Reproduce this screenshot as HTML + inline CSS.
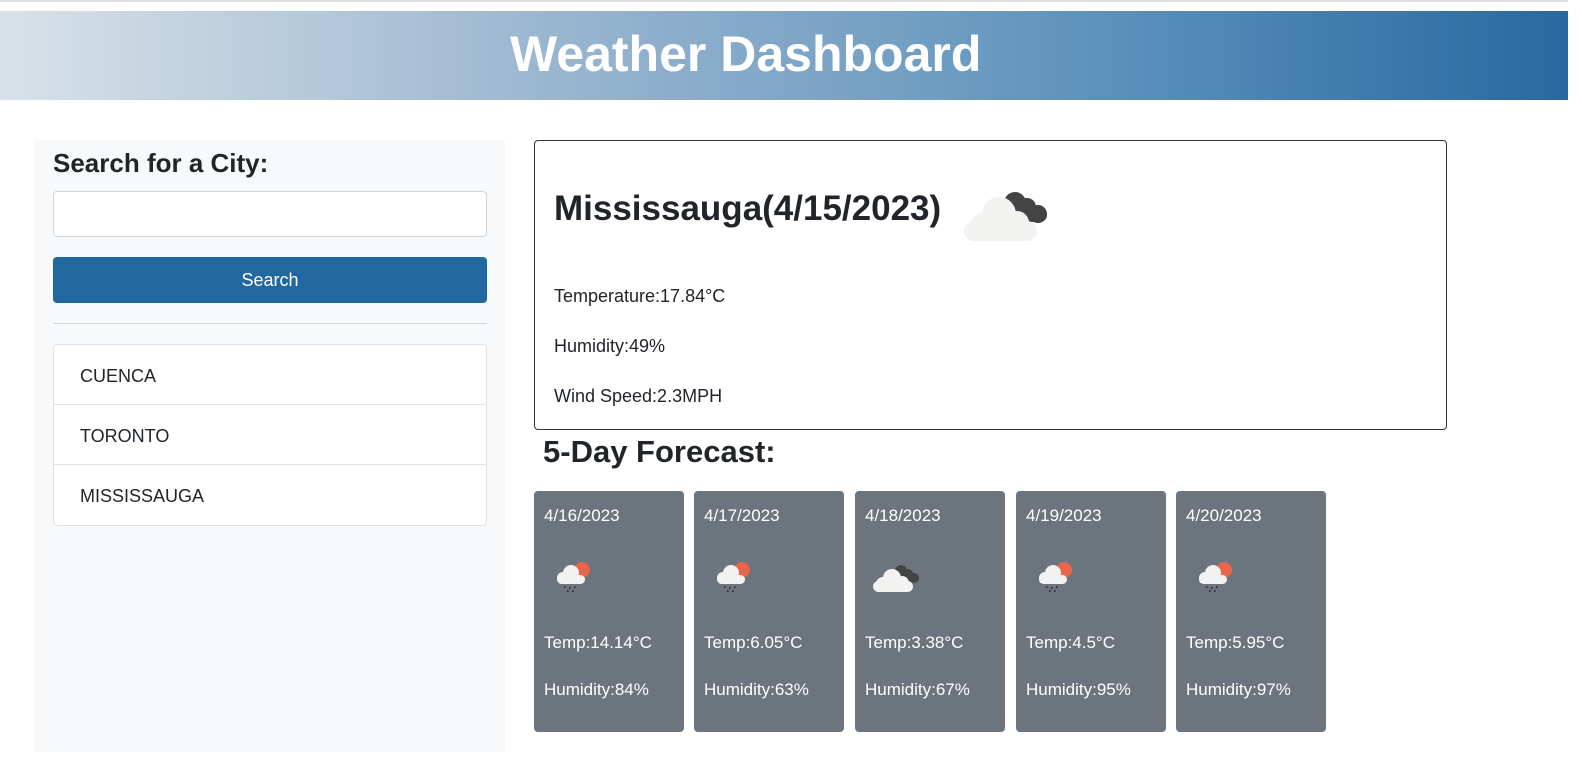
<!DOCTYPE html>
<html><head><style>
*{box-sizing:border-box;margin:0;padding:0}
body{width:1582px;height:772px;background:#fff;font-family:"Liberation Sans",sans-serif;color:#212529;position:relative;overflow:hidden}
.topline{position:absolute;left:0;top:0;width:1568px;height:2px;background:#e0e0e0}
header{position:absolute;left:0;top:11px;width:1568px;height:89px;background:linear-gradient(90deg,#d8e1e9,#9ab6cf 35%,#5d92bc 70%,#2868a0);}
header h1{position:absolute;left:510px;top:14px;color:#fff;font-size:50px;font-weight:bold;white-space:nowrap}
.side{position:absolute;left:34px;top:140px;width:471px;height:612px;background:#f8f9fa}
.side h2{position:absolute;left:19px;top:8px;font-size:26px;font-weight:bold}
.inp{position:absolute;left:19px;top:51px;width:434px;height:46px;background:#fff;border:1px solid #ced4da;border-radius:4px}
.btn{position:absolute;left:19px;top:117px;width:434px;height:46px;background:#2168a1;border-radius:4px;color:#fff;font-size:18px;text-align:center;line-height:46px}
.hr{position:absolute;left:19px;top:183px;width:434px;height:1px;background:#d5d7da}
.list{position:absolute;left:19px;top:204px;width:434px;height:182px;background:#fff;border:1px solid #dfe2e5;border-radius:4px}
.list div{height:60px;border-bottom:1px solid #dfe2e5;padding-left:26px;line-height:62px;font-size:18px}
.list div:last-child{border-bottom:none}
.main{position:absolute;left:534px;top:140px;width:913px;height:290px;border:1px solid #333;border-radius:4px}
.main h2{position:absolute;left:19px;top:48px;font-size:35px;font-weight:bold}
.main p{position:absolute;left:19px;font-size:18px}
.fh{position:absolute;left:543px;top:434px;font-size:31px;font-weight:bold}
.card{position:absolute;top:491px;width:150px;height:241px;background:#6c757d;border-radius:4px;color:#fff;font-size:17px}
.card span{position:absolute;left:10px}
.card svg{position:absolute;left:20px;top:68px}
</style></head><body>
<div class="topline"></div>
<header><h1>Weather Dashboard</h1></header>
<div class="side">
<h2>Search for a City:</h2>
<div class="inp"></div>
<div class="btn">Search</div>
<div class="hr"></div>
<div class="list"><div>CUENCA</div><div>TORONTO</div><div>MISSISSAUGA</div></div>
</div>
<div class="main">
<h2>Mississauga(4/15/2023)</h2>
<svg style="position:absolute;left:426px;top:42px" width="90" height="62" viewBox="0 0 90 62">
<g fill="#444"><circle cx="54" cy="20" r="11"/><circle cx="66" cy="24" r="9"/><circle cx="77" cy="31" r="9"/><rect x="50" y="25" width="36" height="14" rx="7"/></g>
<g fill="#f2f2f0"><circle cx="38" cy="31" r="17"/><circle cx="56" cy="40" r="12"/><circle cx="22" cy="42" r="12"/><rect x="3" y="38" width="73" height="20" rx="10"/></g>
</svg>
<p style="top:145px">Temperature:17.84°C</p>
<p style="top:195px">Humidity:49%</p>
<p style="top:245px">Wind Speed:2.3MPH</p>
</div>
<div class="fh">5-Day Forecast:</div>
<div class="card" style="left:534px"><span style="top:15px">4/16/2023</span><svg width="40" height="36" viewBox="0 0 40 36"><circle cx="28" cy="11" r="8" fill="#e8674a"/><g fill="#f2f2f2"><circle cx="17" cy="14" r="8"/><circle cx="9" cy="19" r="6"/><rect x="3" y="16" width="28" height="9" rx="4.5"/></g><g fill="#333"><rect x="10" y="27" width="1.5" height="2"/><rect x="15" y="28" width="1.5" height="2"/><rect x="20" y="27" width="1.5" height="2"/><rect x="13" y="31" width="1.5" height="2"/><rect x="18" y="31" width="1.5" height="2"/></g></svg><span style="top:142px">Temp:14.14°C</span><span style="top:189px">Humidity:84%</span></div>
<div class="card" style="left:694px"><span style="top:15px">4/17/2023</span><svg width="40" height="36" viewBox="0 0 40 36"><circle cx="28" cy="11" r="8" fill="#e8674a"/><g fill="#f2f2f2"><circle cx="17" cy="14" r="8"/><circle cx="9" cy="19" r="6"/><rect x="3" y="16" width="28" height="9" rx="4.5"/></g><g fill="#333"><rect x="10" y="27" width="1.5" height="2"/><rect x="15" y="28" width="1.5" height="2"/><rect x="20" y="27" width="1.5" height="2"/><rect x="13" y="31" width="1.5" height="2"/><rect x="18" y="31" width="1.5" height="2"/></g></svg><span style="top:142px">Temp:6.05°C</span><span style="top:189px">Humidity:63%</span></div>
<div class="card" style="left:855px"><span style="top:15px">4/18/2023</span><svg style="left:16px" width="50" height="36" viewBox="0 0 50 36"><g fill="#444"><circle cx="30" cy="12" r="6"/><circle cx="37" cy="15" r="5"/><circle cx="43" cy="19" r="5"/><rect x="28" y="15" width="20" height="8" rx="4"/></g><g fill="#f2f2f0"><circle cx="21" cy="19" r="9"/><circle cx="31" cy="24" r="7"/><circle cx="12" cy="25" r="7"/><rect x="2" y="22" width="40" height="11" rx="5.5"/></g></svg><span style="top:142px">Temp:3.38°C</span><span style="top:189px">Humidity:67%</span></div>
<div class="card" style="left:1016px"><span style="top:15px">4/19/2023</span><svg width="40" height="36" viewBox="0 0 40 36"><circle cx="28" cy="11" r="8" fill="#e8674a"/><g fill="#f2f2f2"><circle cx="17" cy="14" r="8"/><circle cx="9" cy="19" r="6"/><rect x="3" y="16" width="28" height="9" rx="4.5"/></g><g fill="#333"><rect x="10" y="27" width="1.5" height="2"/><rect x="15" y="28" width="1.5" height="2"/><rect x="20" y="27" width="1.5" height="2"/><rect x="13" y="31" width="1.5" height="2"/><rect x="18" y="31" width="1.5" height="2"/></g></svg><span style="top:142px">Temp:4.5°C</span><span style="top:189px">Humidity:95%</span></div>
<div class="card" style="left:1176px"><span style="top:15px">4/20/2023</span><svg width="40" height="36" viewBox="0 0 40 36"><circle cx="28" cy="11" r="8" fill="#e8674a"/><g fill="#f2f2f2"><circle cx="17" cy="14" r="8"/><circle cx="9" cy="19" r="6"/><rect x="3" y="16" width="28" height="9" rx="4.5"/></g><g fill="#333"><rect x="10" y="27" width="1.5" height="2"/><rect x="15" y="28" width="1.5" height="2"/><rect x="20" y="27" width="1.5" height="2"/><rect x="13" y="31" width="1.5" height="2"/><rect x="18" y="31" width="1.5" height="2"/></g></svg><span style="top:142px">Temp:5.95°C</span><span style="top:189px">Humidity:97%</span></div>
</body></html>
